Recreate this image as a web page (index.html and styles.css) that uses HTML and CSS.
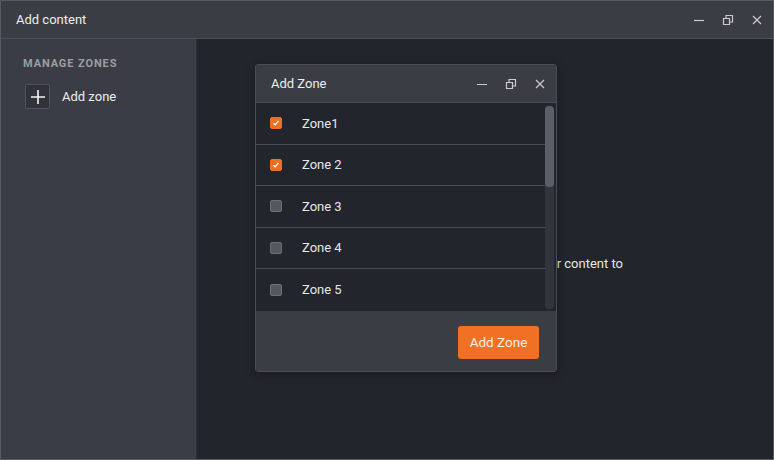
FILE: index.html
```html
<!DOCTYPE html>
<html>
<head>
<meta charset="utf-8">
<link rel="stylesheet" href="styles.css">
</head>
<body>
<div class="window">
  <header class="titlebar">
    <span class="title">Add content</span>
    <div class="controls">
      <svg class="ctl" viewBox="0 0 10 10"><path d="M0 5.5h10" /></svg>
      <svg class="ctl" viewBox="0 0 10 10"><path d="M0.5 3.5h6v6h-6z M3 3.5V0.5h6.5v6.5H6.5" /></svg>
      <svg class="ctl" viewBox="0 0 10 10"><path d="M1 1l8 8M9 1l-8 8" /></svg>
    </div>
  </header>
  <div class="body">
    <aside class="sidebar">
      <div class="section-label">MANAGE ZONES</div>
      <div class="add-zone">
        <span class="plus-box"><svg viewBox="0 0 16 16"><path d="M8 1v14M1 8h14"/></svg></span>
        <span>Add zone</span>
      </div>
    </aside>
    <main class="main">
      <p class="hint">Create a zone to add your content to</p>
    </main>
  </div>

  <div class="modal">
    <div class="modal-head">
      <span class="modal-title">Add Zone</span>
      <div class="controls small">
        <svg class="ctl" viewBox="0 0 10 10"><path d="M0 5.5h10" /></svg>
        <svg class="ctl" viewBox="0 0 10 10"><path d="M0.5 3.5h6v6h-6z M3 3.5V0.5h6.5v6.5H6.5" /></svg>
        <svg class="ctl" viewBox="0 0 10 10"><path d="M1 1l8 8M9 1l-8 8" /></svg>
      </div>
    </div>
    <div class="list">
      <div class="rows">
        <div class="row"><span class="cb checked"><svg viewBox="0 0 12 12"><path d="M3 6.2l2 2 4-4.6"/></svg></span><span>Zone1</span></div>
        <div class="row"><span class="cb checked"><svg viewBox="0 0 12 12"><path d="M3 6.2l2 2 4-4.6"/></svg></span><span>Zone 2</span></div>
        <div class="row"><span class="cb"></span><span>Zone 3</span></div>
        <div class="row"><span class="cb"></span><span>Zone 4</span></div>
        <div class="row last"><span class="cb"></span><span>Zone 5</span></div>
      </div>
      <div class="scrollbar"><div class="thumb"></div></div>
    </div>
    <div class="modal-foot">
      <button class="btn">Add Zone</button>
    </div>
  </div>
</div>
</body>
</html>
```

FILE: styles.css
```css
* { box-sizing: border-box; }
html, body { margin: 0; padding: 0; background: #22252c; }
body { font-family: Roboto, "Noto Sans", "Liberation Sans", sans-serif; color: #e6e7e9; }

.window {
  position: relative;
  width: 774px;
  height: 460px;
  border: 1px solid #575a61;
  display: flex;
  flex-direction: column;
  background: #22252c;
  overflow: hidden;
}

.titlebar {
  height: 38px;
  flex: none;
  background: #3a3d44;
  border-bottom: 1px solid #4c4f56;
  display: flex;
  align-items: center;
  justify-content: space-between;
  padding: 0 11px 0 15px;
}
.title { font-size: 13px; color: #eceef0; }

.controls { display: flex; gap: 19px; align-items: center; }
.ctl { width: 10px; height: 10px; fill: none; stroke: #c9cbce; stroke-width: 1.2; overflow: visible; }

.body { flex: 1; display: flex; min-height: 0; }

.sidebar {
  width: 196px;
  flex: none;
  background: #3a3d45;
  border-right: 1px solid #2d3036;
  padding: 18px 0 0 22px;
}
.section-label {
  font-size: 11px;
  font-weight: 700;
  letter-spacing: 0.9px;
  color: #9a9da3;
}
.add-zone {
  margin-top: 14px;
  display: flex;
  align-items: center;
  gap: 12px;
  font-size: 13px;
  color: #eceef0;
}
.plus-box {
  width: 25px; height: 25px;
  margin-left: 2px;
  border: 1px solid #50535a;
  background: #30333a;
  border-radius: 2px;
  display: flex; align-items: center; justify-content: center;
}
.plus-box svg { width: 16px; height: 16px; fill: none; stroke: #f2f3f4; stroke-width: 1.6; }

.main { flex: 1; position: relative; }
.hint {
  margin: 0;
  padding-top: 217px;
  width: 300px;
  margin-left: 126px;
  text-align: right;
  font-size: 13px;
  color: #e6e7e9;
}

.modal {
  position: absolute;
  left: 254px;
  top: 63px;
  width: 302px;
  height: 308px;
  border: 1px solid #4a4d54;
  border-radius: 3px;
  background: #22252c;
  display: flex;
  flex-direction: column;
  overflow: hidden;
  box-shadow: 0 2px 8px rgba(0,0,0,0.35);
}
.modal-head {
  height: 38px;
  flex: none;
  background: #3a3d44;
  border-bottom: 1px solid #4a4d54;
  display: flex;
  align-items: center;
  justify-content: space-between;
  padding: 0 11px 0 15px;
}
.modal-title { font-size: 13px; color: #eceef0; }

.list { flex: 1; display: flex; min-height: 0; position: relative; }
.rows { flex: 1; }
.row {
  height: 41.5px;
  border-bottom: 1px solid #4a4d54;
  display: flex;
  align-items: center;
  padding-left: 14px;
  gap: 20px;
  font-size: 13px;
  color: #e6e7e9;
}
.row.last { border-bottom: none; }
.cb {
  width: 12px; height: 12px;
  border-radius: 2px;
  background: #55585e;
  border: 1px solid #6c6f75;
  display: flex; align-items: center; justify-content: center;
}
.cb.checked { background: #ee6f22; border-color: #ee6f22; }
.cb svg { width: 10px; height: 10px; fill: none; stroke: #fff; stroke-width: 1.6; }

.scrollbar {
  width: 9px;
  margin: 3px 2px 2px 0;
  background: #32353c;
  border-radius: 4px;
}
.thumb {
  height: 81px;
  background: #5b5e66;
  border-radius: 4px;
}

.modal-foot {
  height: 60px;
  flex: none;
  background: #3a3d44;
  display: flex;
  align-items: center;
  justify-content: flex-end;
  padding: 2px 17px 0 0;
}
.btn {
  width: 81px;
  height: 33px;
  background: #f07024;
  border: none;
  border-radius: 3px;
  color: #fbeee6;
  font-family: Roboto, "Noto Sans", sans-serif;
  font-size: 13.5px;
  padding: 0;
}
```
